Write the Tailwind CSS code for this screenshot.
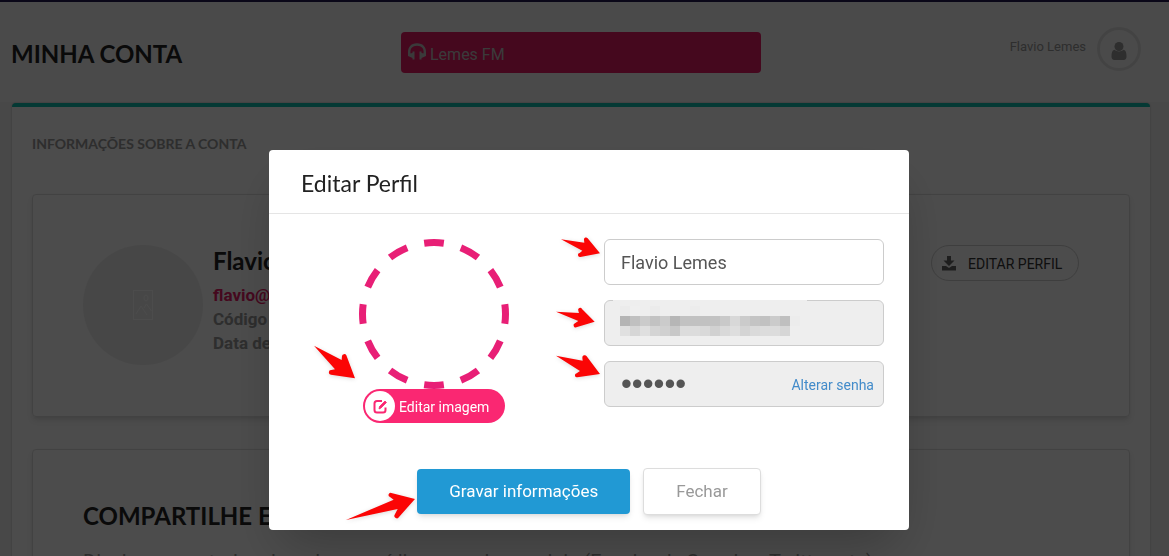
<!DOCTYPE html>
<html lang="pt-BR">
<head>
    <meta charset="UTF-8">
    <meta name="viewport" content="width=device-width, initial-scale=1.0">
    <title>Minha Conta</title>
    <script src="https://cdn.jsdelivr.net/npm/@tailwindcss/browser@4"></script>
</head>
<body class="h-screen overflow-hidden bg-[#f2f2f2] font-['Roboto',sans-serif] text-[#999]">
    <!-- Top bar -->
    <header class="h-[102px] border-t-2 border-[#221850] bg-[#f8f8f8] pl-[11px] pr-[18px]">
        <div class="grid h-full grid-cols-3 items-center">
            <h1 class="pt-1 font-['Lato',sans-serif] text-[24px] font-bold leading-8 text-[#222]">MINHA CONTA</h1>
            <div class="flex h-[41px] w-[360px] items-center gap-[3px] justify-self-center rounded bg-[#e61b67] pl-1.5 pt-1.5 text-base text-[#c4c4c4]">
                <svg class="mb-1.5 h-[18px] w-5" viewBox="0 0 20 18" fill="currentColor">
                    <path d="M2.5 12C1 4.500 5 1.500 10 1.500S19 4.500 17.500 12" fill="none" stroke="currentColor" stroke-width="2.400" />
                    <path d="M7.500 8.500v8H5.500V15L1 13v-2l4.500-1V8.500zM12.500 8.500v8h2V15l4.500-2v-2l-4.500-1V8.500z" />
                </svg>
                <span>Lemes FM</span>
            </div>
            <div class="flex items-center justify-end gap-[11px] pb-1.5 pr-2.5">
                <span class="pb-1 text-[13px] text-[#999]">Flavio Lemes</span>
                <span class="flex size-11 items-center justify-center rounded-full border-3 border-[#e2e2e2]">
                    <svg class="mt-1 h-[18px] w-4" viewBox="0 0 16 18" fill="#999">
                        <circle cx="8" cy="4.500" r="4.500" />
                        <path d="M3.500 7.800C1 8.500.500 11 .500 14.500c0 2 1 3.500 3 3.500h9c2 0 3-1.500 3-3.500 0-3.500-.500-6-3-6.700-2.500 2.300-6.500 2.300-9 0z" />
                    </svg>
                </span>
            </div>
        </div>
    </header>

    <!-- Account panel -->
    <main class="ml-3 mr-[19px] mt-px rounded-t-sm border-t-4 border-t-[#0ec0b0] bg-[#fdfdfd] px-5 pb-8 pt-[27px] shadow-[0_0_2px_rgba(0,0,0,0.3)]">
        <h2 class="font-['Lato',sans-serif] text-sm font-bold text-[#999]">INFORMAÇÕES SOBRE A CONTA</h2>

        <section class="mt-10 flex h-[223px] items-start gap-2.5 rounded border border-[#dedede] pl-[50px] pr-[50px] pt-[50px] shadow-md">
            <span class="flex size-[120px] shrink-0 items-center justify-center rounded-full bg-[#eee]">
                <svg class="h-[30px] w-5" viewBox="0 0 20 30" fill="none" stroke="#fff">
                    <rect x=".5" y=".5" width="19" height="29" />
                    <ellipse cx="13" cy="8" rx="2" ry="3" />
                    <path d="M3 24l5-8 6 9M11 18l2.500-4 5 7" />
                </svg>
            </span>
            <div class="grow text-[17px] font-bold leading-6">
                <h3 class="mb-1.5 font-['Lato',sans-serif] text-[24px] leading-8 text-[#222]">Flavio Lemes</h3>
                <p class="text-[#e61b67]">flavio@lemesfm.com</p>
                <p>Código do cliente</p>
                <p>Data de cadastro</p>
            </div>
            <button class="flex h-9 w-[148px] items-center gap-3 rounded-full border border-[#d0d0d0] pl-2.5 text-sm text-[#333]">
                <svg class="h-[15px] w-3.5" viewBox="0 0 14 15" fill="#666">
                    <path d="M5 0h4v4.500h3.500L7 10 1.500 4.500H5z" />
                    <path d="M0 10h4l3 2 3-2h4v4.500H0z" />
                </svg>
                <span class="pt-0.5">EDITAR PERFIL</span>
            </button>
        </section>

        <section class="mt-8 rounded border border-[#dedede] px-[50px] pb-10 pt-[50px] shadow-md">
            <h3 class="font-['Lato',sans-serif] text-[24px] font-bold leading-8 text-[#222]">COMPARTILHE E GANHE</h3>
            <p class="mt-4 text-xl leading-7">Divulgue para todos da rede em mídias ou redes sociais (Facebook, Google+, Twitter, etc)</p>
        </section>
    </main>

    <!-- Modal -->
    <div class="fixed inset-0 flex items-start justify-center bg-black/70 pl-[9px] pt-[150px]">
        <div role="dialog" aria-labelledby="modalTitle" class="relative w-[640px] rounded-sm bg-white pb-[15px] shadow-2xl">
            <h2 id="modalTitle" class="border-b border-[#e5e5e5] px-8 pb-3.5 pt-[17px] font-['Lato',sans-serif] text-[23px] leading-8 text-[#222]">Editar Perfil</h2>

            <form>
                <div class="grid grid-cols-2 gap-[30px] px-[25px] pt-[25px]">
                    <div class="flex flex-col items-center">
                        <svg class="size-[150px]" viewBox="0 0 150 150">
                            <circle cx="75" cy="75" r="71.5" fill="none" stroke="#e81f76" stroke-width="7" pathLength="1200" stroke-dasharray="53 47" stroke-dashoffset="26.5" />
                        </svg>
                        <button type="button" class="flex h-[34px] w-[142px] items-center gap-1 rounded-full bg-[#fa2772] pl-0.5 text-sm text-white">
                            <span class="flex size-[30px] items-center justify-center rounded-full bg-white">
                                <svg class="size-[15px]" viewBox="0 0 15 15" fill="none" stroke="#fa2772">
                                    <path d="M9 2H4Q1.500 2 1.500 4.500v6.500Q1.500 13.500 4 13.500h6q2.500 0 2.500-2.500V8.500" stroke-width="2" />
                                    <path d="M6 10l.5-2.500L12 2l1.500 1.500L8 9z" fill="#fa2772" stroke-width=".8" />
                                </svg>
                            </span>
                            <span class="pt-0.5">Editar imagem</span>
                        </button>
                    </div>

                    <div class="flex flex-col gap-[15px] text-lg text-[#555]">
                        <input type="text" aria-label="Nome" value="Flavio Lemes" class="h-[46px] w-full rounded-md border border-[#ccc] px-4">
                        <div class="relative">
                            <input type="email" aria-label="E-mail" disabled class="block h-[46px] w-full rounded-md border border-[#ccc] bg-[#eee] px-4">
                            <!-- Hidden e-mail address -->
                            <svg class="absolute left-[9px] top-0 h-[39px] w-[194px]" viewBox="0 0 194 39" shape-rendering="crispEdges">
                                <rect width="194" height="39" fill="#eee" />
                                <g id="mosaic" transform="translate(7 6)"></g>
                            </svg>
                        </div>
                        <div class="flex h-[46px] items-center rounded-md border border-[#ccc] bg-[#eee] pl-4 pr-[9px]">
                            <input type="password" aria-label="Senha" value="123456" readonly class="h-9 min-w-0 grow font-['Liberation_Sans',sans-serif] text-[31px]">
                            <a href="#" class="whitespace-nowrap pt-0.5 text-sm text-[#428bca]">Alterar senha</a>
                        </div>
                    </div>
                </div>

                <div class="mt-[45px] flex items-center justify-center gap-[13px] text-[17px]">
                    <button type="submit" class="h-[45px] rounded bg-[#2199d4] px-8 text-white shadow-md">Gravar informações</button>
                    <button type="button" class="h-[47px] rounded border border-[#ddd] bg-white px-8 text-[#999] shadow-md">Fechar</button>
                </div>
            </form>

            <!-- Arrows -->
            <svg class="pointer-events-none absolute left-0 top-0 h-[380px] w-[640px] drop-shadow-sm" viewBox="0 0 640 380" fill="#fb0505">
                <g transform="translate(30 70) scale(.3333)">
                    <path d="M45 377L128 420L129 408A7 7 0 0 1 142 406L168 475L96 464A7 7 0 0 1 97 450L108 448Z" />
                </g>
                <g transform="translate(270 75) scale(.3333)">
                    <path d="M66 43L136 53L135 44A6 6 0 0 1 146 40L183 85L124 96A6 6 0 0 1 122 84L130 77Z" />
                    <path d="M51 260L120 264L118 257A6 6 0 0 1 129 252L167 290L112 307A6 6 0 0 1 108 295L118 288Z" />
                    <path d="M51 392L131 407L130 398A7 7 0 0 1 143 394L183 447L115 457A6 6 0 0 1 113 445L123 438Z" />
                </g>
                <g transform="translate(60 305) scale(.3333)">
                    <path d="M51 195L194 134L183 126A6 6 0 0 1 187 114L258 132L210 186A7 7 0 0 1 197 179L206 162Z" />
                </g>
            </svg>
        </div>
    </div>

    <script>
        const rows = [
            ['#ebebeb', '#efefef', '#eeeeee', '#ebebeb', '#eeeeee', '#eeeeee', '#eeeeee', '#ececec'],
            ['#b4b4b4', '#c0c0c0', '#cbcbcb', '#c2c2c2', '#cbcbcb', '#b6b6b6', '#c2c2c2', '#c1c1c1', '#c1c1c1', '#c2c2c2', '#c9c9c9', '#d8d8d8', '#cbcbcb', '#c4c4c4', '#c1c1c1', '#cbcbcb', '#bfbfbf', '#ececec'],
            ['#e0e0e0', '#d6d6d6', '#dfdfdf', '#d4d4d4', '#d0d0d0', '#c8c8c8', '#dcdcdc', '#dcdcdc', '#d9d9d9', '#d1d1d1', '#d9d9d9', '#dedede', '#d4d4d4', '#dadada', '#dcdcdc', '#dcdcdc', '#d6d6d6'],
        ];

        document.getElementById('mosaic').innerHTML = rows.map((row, y) =>
            row.map((color, x) => `<rect x="${x * 10}" y="${y * 10}" width="10" height="10" fill="${color}"/>`).join('')
        ).join('');
    </script>
</body>
</html>
